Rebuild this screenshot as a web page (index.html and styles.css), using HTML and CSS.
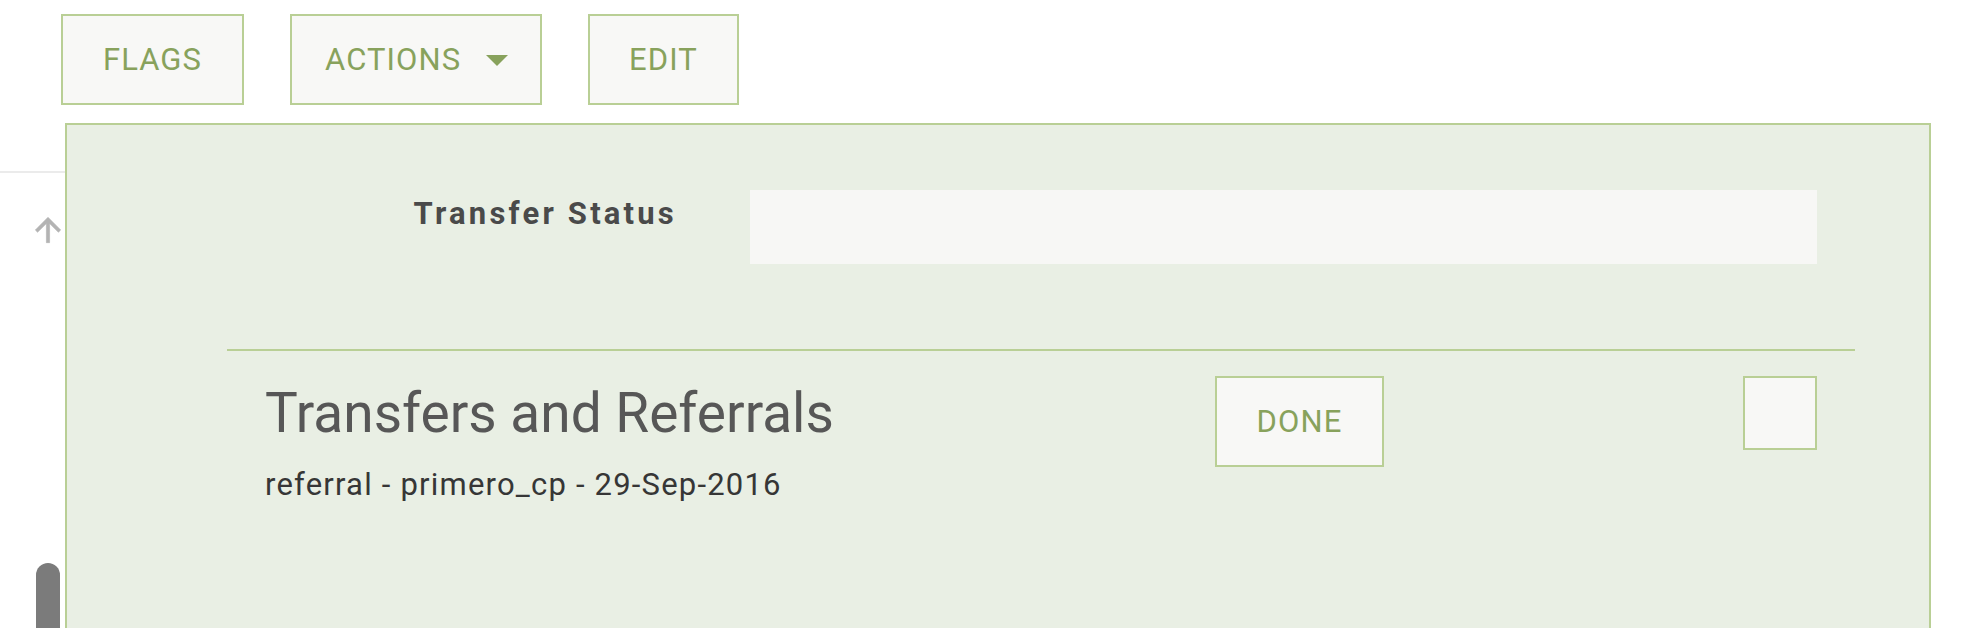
FILE: index.html
```html
<!DOCTYPE html>
<html lang="en">
<head>
<meta charset="utf-8">
<title>Transfers and Referrals</title>
<link rel="stylesheet" href="styles.css">
</head>
<body>
<div class="toolbar">
  <button class="btn btn-flags">FLAGS</button>
  <button class="btn btn-actions">ACTIONS <span class="caret"></span></button>
  <button class="btn btn-edit">EDIT</button>
</div>
<div class="main">
  <div class="gutter">
    <div class="gutter-line"></div>
    <svg class="up-arrow" viewBox="0 0 24 24" width="38" height="38" aria-hidden="true"><path d="M4 12l1.41 1.41L11 7.83V20h2V7.83l5.58 5.59L20 12l-8-8-8 8z" fill="#b3b3b3" stroke="#b3b3b3" stroke-width="0.4"/></svg>
    <div class="thumb"></div>
  </div>
  <div class="panel">
    <div class="field">
      <label class="field-label">Transfer Status</label>
      <div class="field-input"></div>
    </div>
    <div class="section">
      <div class="item">
        <div class="item-text">
          <h2 class="item-title">Transfers and Referrals</h2>
          <p class="item-sub">referral - primero_cp - 29-Sep-2016</p>
        </div>
        <button class="btn btn-done">DONE</button>
        <div class="check"></div>
      </div>
    </div>
  </div>
</div>
</body>
</html>
```
FILE: styles.css
```css
html, body {
  margin: 0;
  padding: 0;
  background: #ffffff;
  overflow: hidden;
  font-family: Roboto, "Liberation Sans", Arial, sans-serif;
}

.toolbar {
  display: flex;
  gap: 46px;
  padding: 14px 0 0 61px;
  height: 91px;
}

.btn {
  box-sizing: border-box;
  height: 91px;
  padding: 0;
  border: 2px solid #b9cf95;
  background: #f8f8f6;
  color: #88a25c;
  font-family: Roboto, "Liberation Sans", Arial, sans-serif;
  font-size: 31px;
  font-weight: 400;
  letter-spacing: 1.1px;
  display: flex;
  align-items: center;
  justify-content: center;
  cursor: pointer;
}

.btn-flags {
  width: 183px;
}

.btn-edit {
  width: 151px;
}

.btn-actions {
  width: 252px;
  padding: 0 32px 0 33px;
  justify-content: space-between;
}

.caret {
  width: 0;
  height: 0;
  border-left: 11px solid transparent;
  border-right: 11px solid transparent;
  border-top: 11px solid #88a25c;
  margin-top: 2px;
}

.main {
  display: flex;
  margin-top: 18px;
}

.gutter {
  position: relative;
  width: 65px;
  flex: none;
}

.gutter-line {
  margin-top: 48px;
  height: 2px;
  background: #ebebeb;
}

.up-arrow {
  position: absolute;
  left: 29px;
  top: 88px;
}

.thumb {
  position: absolute;
  left: 36px;
  top: 440px;
  width: 24px;
  height: 120px;
  border-radius: 12px 12px 0 0;
  background: #7b7b7b;
}

.panel {
  box-sizing: border-box;
  width: 1866px;
  min-height: 640px;
  border: 2px solid #b9cf95;
  border-bottom: none;
  background: #e9efe4;
}

.field {
  display: flex;
  align-items: flex-start;
  padding-top: 65px;
}

.field-label {
  box-sizing: border-box;
  width: 610px;
  margin-top: 5px;
  text-align: right;
  font-family: Roboto, "Liberation Sans", Arial, sans-serif;
  font-weight: 700;
  font-size: 31px;
  letter-spacing: 3.2px;
  color: #4a4a4a;
}

.field-input {
  margin-left: 73px;
  width: 1067px;
  height: 74px;
  background: #f7f7f5;
}

.section {
  margin: 85px 74px 0 160px;
  border-top: 2px solid #b9cf95;
  padding: 25px 38px 0 38px;
}

.item {
  display: grid;
  grid-template-columns: 1fr 169px 433px;
  align-items: start;
}

.item-text {
  padding-top: 5px;
}

.item-title {
  margin: 0;
  font-family: Roboto, "Liberation Sans", Arial, sans-serif;
  font-weight: 400;
  font-size: 55px;
  letter-spacing: 0;
  color: #575757;
}

.item-sub {
  margin: 21px 0 0 0;
  font-family: Roboto, "Liberation Sans", Arial, sans-serif;
  font-size: 31px;
  letter-spacing: 1.2px;
  color: #363636;
}

.btn-done {
  width: 169px;
}

.check {
  justify-self: end;
  box-sizing: border-box;
  width: 74px;
  height: 74px;
  border: 2px solid #b9cf95;
  background: #f8f8f6;
}
```
